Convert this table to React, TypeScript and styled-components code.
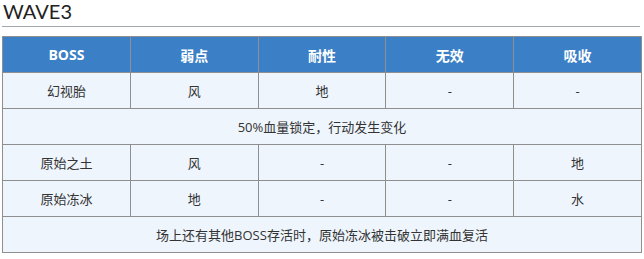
import React from 'react';
import styled, { createGlobalStyle } from 'styled-components';

const GlobalStyle = createGlobalStyle`
  body {
    margin: 0;
    background: #ffffff;
    font-family: "Open Sans", "Noto Sans CJK SC", sans-serif;
  }
`;

const Page = styled.div`
  padding: 0 2px;
  width: 640px;
`;

const Title = styled.h2`
  margin: 0;
  padding: 0 0 0 1px;
  height: 26px;
  font-family: Lato, "Open Sans", sans-serif;
  font-weight: 400;
  font-size: 20px;
  line-height: 23px;
  color: #222222;
  border-bottom: 1px solid #a2a9b1;
  width: 637px;
`;

const Table = styled.table`
  margin-top: 9px;
  width: 640px;
  border-collapse: collapse;
  table-layout: fixed;
  border: 1px solid #8f8f8f;
  font-family: "Open Sans", "Noto Sans CJK SC", sans-serif;
  font-size: 13px;
`;

const Th = styled.th`
  height: 35px;
  padding: 0;
  background: #3b80c6;
  color: #ffffff;
  font-size: 14px;
  font-weight: 700;
  border: 1px solid #8f8f8f;
  text-align: center;
`;

const Td = styled.td`
  height: 35px;
  padding: 0;
  background: #eef5fd;
  color: #333333;
  border: 1px solid #8f8f8f;
  text-align: center;
`;

const headers = ['BOSS', '弱点', '耐性', '无效', '吸收'];

type Row = { cells?: string[]; note?: string };

const rows: Row[] = [
  { cells: ['幻视胎', '风', '地', '-', '-'] },
  { note: '50%血量锁定，行动发生变化' },
  { cells: ['原始之土', '风', '-', '-', '地'] },
  { cells: ['原始冻冰', '地', '-', '-', '水'] },
  { note: '场上还有其他BOSS存活时，原始冻冰被击破立即满血复活' },
];

export default function App() {
  return (
    <Page>
      <GlobalStyle />
      <Title>WAVE3</Title>
      <Table>
        <thead>
          <tr>
            {headers.map((h) => (
              <Th key={h}>{h}</Th>
            ))}
          </tr>
        </thead>
        <tbody>
          {rows.map((r, i) => (
            <tr key={i}>
              {r.note ? (
                <Td colSpan={5}>{r.note}</Td>
              ) : (
                r.cells!.map((c, j) => <Td key={j}>{c}</Td>)
              )}
            </tr>
          ))}
        </tbody>
      </Table>
    </Page>
  );
}
